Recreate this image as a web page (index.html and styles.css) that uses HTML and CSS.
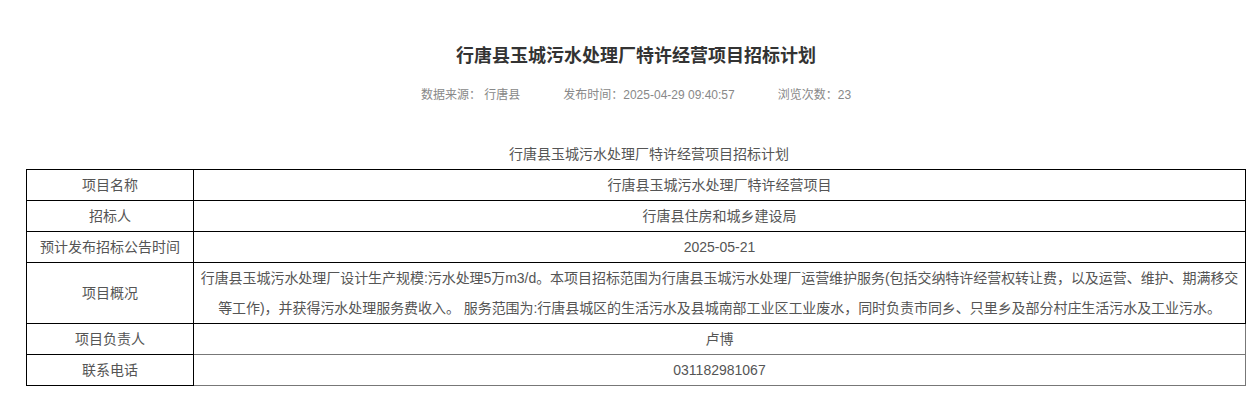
FILE: index.html
```html
<!DOCTYPE html>
<html lang="zh-CN">
<head>
<meta charset="utf-8">
<title>行唐县玉城污水处理厂特许经营项目招标计划</title>
<link rel="stylesheet" href="styles.css">
</head>
<body>
<div class="article">
  <h1 class="title">行唐县玉城污水处理厂特许经营项目招标计划</h1>
  <div class="meta">
    <span class="meta-item">数据来源： 行唐县</span>
    <span class="meta-item">发布时间：2025-04-29 09:40:57</span>
    <span class="meta-item">浏览次数：23</span>
  </div>
  <div class="caption">行唐县玉城污水处理厂特许经营项目招标计划</div>
  <table class="info">
    <tbody>
      <tr><td class="label">项目名称</td><td class="value">行唐县玉城污水处理厂特许经营项目</td></tr>
      <tr><td class="label">招标人</td><td class="value">行唐县住房和城乡建设局</td></tr>
      <tr><td class="label">预计发布招标公告时间</td><td class="value">2025-05-21</td></tr>
      <tr><td class="label">项目概况</td><td class="value desc">行唐县玉城污水处理厂设计生产规模:污水处理5万m3/d。本项目招标范围为行唐县玉城污水处理厂运营维护服务(包括交纳特许经营权转让费，以及运营、维护、期满移交等工作)，并获得污水处理服务费收入。 服务范围为:行唐县城区的生活污水及县城南部工业区工业废水，同时负责市同乡、只里乡及部分村庄生活污水及工业污水。</td></tr>
      <tr><td class="label">项目负责人</td><td class="value soft">卢博</td></tr>
      <tr><td class="label">联系电话</td><td class="value soft">031182981067</td></tr>
    </tbody>
  </table>
</div>
</body>
</html>
```
FILE: styles.css
```css
html, body {
  margin: 0;
  padding: 0;
  background: #fff;
}
body {
  font-family: "Liberation Sans", "Noto Sans CJK SC", sans-serif;
  color: #555;
}
.article {
  padding: 0 10px 0 26px;
}
.title {
  margin: 0;
  padding-top: 44px;
  font-size: 18px;
  line-height: 24px;
  font-weight: bold;
  color: #333;
  text-align: center;
}
.meta {
  margin-top: 17px;
  display: flex;
  justify-content: center;
  gap: 43px;
  font-size: 12px;
  line-height: 20px;
  color: #888;
}
.caption {
  margin-top: 34px;
  padding-left: 26px;
  font-size: 14px;
  line-height: 30px;
  text-align: center;
  color: #555;
}
.info {
  width: 100%;
  border-collapse: collapse;
  table-layout: fixed;
  font-size: 14px;
  color: #555;
}
.info td {
  border: 1px solid #000;
  line-height: 30px;
  height: 30px;
  padding: 0;
  text-align: center;
  vertical-align: middle;
}
.info td.label {
  width: 166px;
}
.info td.desc {
  padding: 0;
  letter-spacing: -0.05px;
}
.info td.soft {
  border-color: #777;
}
```
